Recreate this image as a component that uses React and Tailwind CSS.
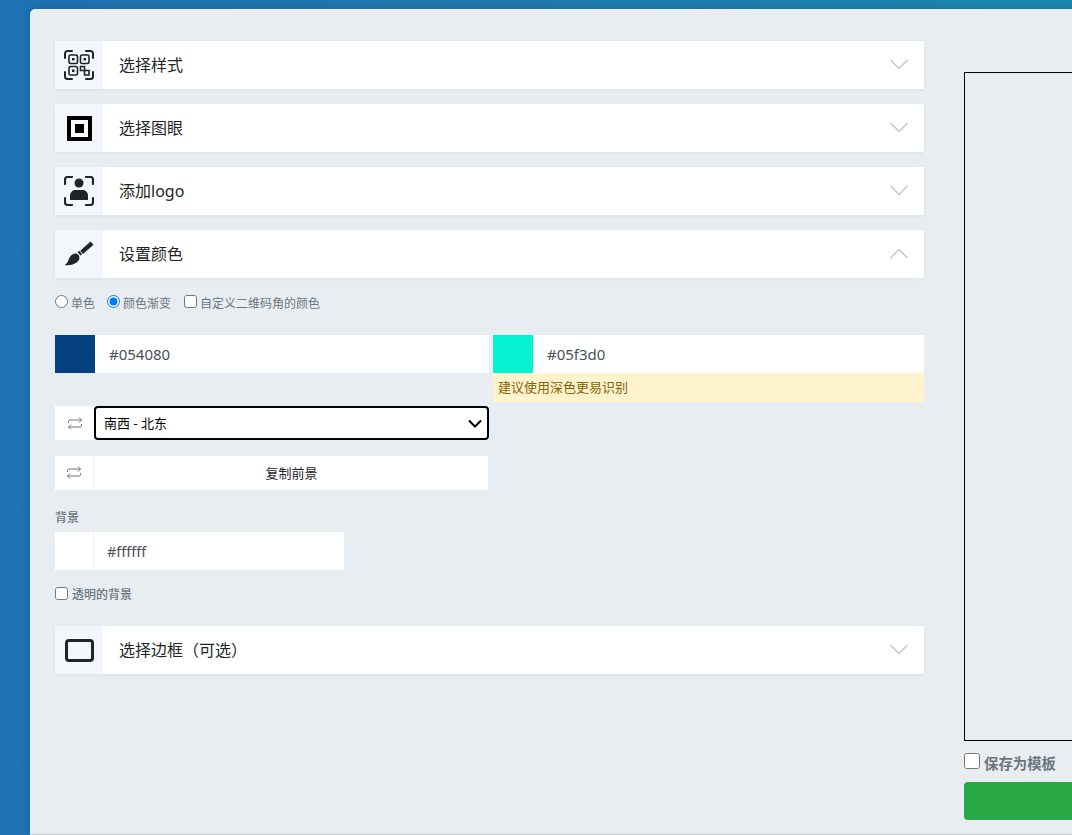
import React from "react";

const cjk = "font-['Noto_Sans','Noto_Sans_CJK_SC',sans-serif]";

function Corners({ width = 2 }) {
  return (
    <path
      d="M1 8V3.500A2.500 2.500 0 0 1 3.500 1H8M22 1h4.500A2.500 2.500 0 0 1 29 3.500V8M29 22v4.500a2.500 2.500 0 0 1-2.500 2.500H22M8 29H3.500A2.500 2.500 0 0 1 1 26.500V22"
      fill="none"
      stroke="#212529"
      strokeWidth={width}
      strokeLinecap="round"
    />
  );
}

function IconQr() {
  return (
    <svg width="30" height="30" viewBox="0 0 30 30">
      <Corners />
      <g fill="none" stroke="#212529" strokeWidth="1.600">
        <rect x="5" y="5" width="8.500" height="8.500" rx="1.500" />
        <rect x="16.500" y="5" width="8.500" height="8.500" rx="1.500" />
        <rect x="5" y="16.500" width="8.500" height="8.500" rx="1.500" />
        <path d="M16.500 16.500h4v4h4.500v4.500h-4.500v-4.500h-4z" />
      </g>
      <g fill="#212529">
        <rect x="8" y="8" width="2.500" height="2.500" />
        <rect x="19.500" y="8" width="2.500" height="2.500" />
        <rect x="8" y="19.500" width="2.500" height="2.500" />
      </g>
    </svg>
  );
}

function IconEye() {
  return (
    <svg width="25" height="25" viewBox="0 0 25 25" className="ml-px mt-px">
      <rect x="0" y="0" width="25" height="25" fill="#000" />
      <rect x="4" y="4" width="17" height="17" fill="#fff" />
      <rect x="8" y="8" width="9" height="9" fill="#000" />
    </svg>
  );
}

function IconPerson() {
  return (
    <svg width="30" height="30" viewBox="0 0 30 30">
      <Corners width={2.200} />
      <circle cx="15" cy="7" r="4.500" fill="#212529" />
      <path d="M6 24v-4.500C6 16.500 8.500 14 11 14h8c2.500 0 5 2.500 5 5.500V24z" fill="#212529" />
    </svg>
  );
}

function IconBrush() {
  return (
    <svg width="30" height="26" viewBox="0 0 30 26">
      <path d="M26.500 .500l3 3.200-10.500 9.300-2.700-3.200z" fill="#212529" />
      <path d="M15.300 9.800l2.800 3.400-1.700 1.400-2.800-3.400z" fill="#212529" />
      <path d="M11.500 12.500c2.500 0 4.200 2.200 3.900 4.800C14.800 22 8 25 .500 24c2-1 3-2.500 4-5 1-3.300 3.500-6.500 7-6.500z" fill="#212529" />
    </svg>
  );
}

function IconFrame() {
  return (
    <svg width="29" height="23" viewBox="0 0 29 23">
      <rect x="1.500" y="1.500" width="26" height="20" rx="2.500" fill="#f3f7fb" stroke="#212529" strokeWidth="3" />
    </svg>
  );
}

function IconSwap() {
  return (
    <svg width="14" height="13" viewBox="0 0 14 13" fill="none" stroke="#5f686f" strokeWidth="0.900">
      <path d="M.500 6V4.500a1.500 1.500 0 0 1 1.500-1.500h11.500M11 .500l2.500 2.500L11 5.500" />
      <path d="M13.500 7v1.500a1.500 1.500 0 0 1-1.500 1.500H.500M3 7.500L.500 10 3 12.500" />
    </svg>
  );
}

function Chevron({ up }) {
  return (
    <svg width="18" height="11" viewBox="0 0 18 11" fill="none" stroke="#bcbfc2" strokeWidth="1.200">
      <path d={up ? "M.500 10L9 1.500 17.500 10" : "M.500 1L9 9.500 17.500 1"} />
    </svg>
  );
}

function AccordionRow({ icon, title, open }) {
  return (
    <div className="flex h-12 items-center bg-white shadow-[0_1px_4px_rgba(0,0,0,0.06)]">
      <div className="flex h-full w-12 items-center justify-center bg-[#f3f7fb]">{icon}</div>
      <div className="flex-1 pl-4 text-base text-[#212529]">{title}</div>
      <div className="flex w-[50px] justify-center pb-[2px]"><Chevron up={open} /></div>
    </div>
  );
}

function ColorInput({ color, value }) {
  return (
    <div className="flex h-[38px] bg-white">
      <div className="w-10" style={{ backgroundColor: color }} />
      <div className="flex flex-1 items-center pl-[14px] text-[15px] text-[#495057]">{value}</div>
    </div>
  );
}

export default function App() {
  return (
    <div className={`h-[835px] w-[1072px] overflow-hidden bg-[linear-gradient(90deg,#1f73b5_0%,#1f7db0_50%,#1a8ab3_100%)] pl-[30px] pt-[9px] ${cjk}`}>
      <div className="flex h-[826px] w-[1100px] rounded-tl-[5px] border-b border-[#c9ced2] bg-[#e8edf1] pl-[25px] pt-8 shadow-[0_0_12px_rgba(0,0,0,0.2)]">
        {/* Left column */}
        <div className="w-[869px] shrink-0">
          <div className="flex flex-col gap-[15px]">
            <AccordionRow icon={<IconQr />} title="选择样式" />
            <AccordionRow icon={<IconEye />} title="选择图眼" />
            <AccordionRow icon={<IconPerson />} title="添加logo" />
            <AccordionRow icon={<IconBrush />} title="设置颜色" open />
          </div>

          {/* Colour options */}
          <div className="mt-4 flex h-[18px] items-center text-xs text-[#6c757d]">
            <label className="flex items-center">
              <input type="radio" name="fill" className="m-0 mb-[3px] h-[13px] w-[13px]" />
              <span className="ml-[3px] mt-px">单色</span>
            </label>
            <label className="ml-[12px] flex items-center">
              <input type="radio" name="fill" defaultChecked className="m-0 mb-[3px] h-[13px] w-[13px]" />
              <span className="ml-[3px] mt-px">颜色渐变</span>
            </label>
            <label className="ml-[13px] flex items-center">
              <input type="checkbox" className="m-0 mb-[3px] h-[13px] w-[13px]" />
              <span className="ml-[3px] mt-px">自定义二维码角的颜色</span>
            </label>
          </div>

          <div className="mt-[23px] grid grid-cols-[434px_431px] gap-x-1">
            <ColorInput color="#054080" value="#054080" />
            <div>
              <ColorInput color="#05f3d0" value="#05f3d0" />
              <div className="flex h-[29px] items-center bg-[#fff3cd] pl-[5px] text-[13px] text-[#856404]">
                建议使用深色更易识别
              </div>
            </div>
          </div>

          <div className="mt-[4px] flex h-[34px] w-[434px] bg-white">
            <div className="flex w-[39px] shrink-0 items-center justify-center"><IconSwap /></div>
            <div className="relative flex-1">
              <select className="h-full w-full appearance-none rounded-[4px] border-2 border-black bg-white pl-2 pt-px text-[13px] text-black outline-none">
                <option>南西 - 北东</option>
              </select>
              <svg width="14" height="9" viewBox="0 0 14 9" fill="none" stroke="#000" strokeWidth="2" className="pointer-events-none absolute right-[7px] top-[13px]">
                <path d="M1 1.500l6 6 6-6" />
              </svg>
            </div>
          </div>

          <div className="mt-4 flex h-[34px] w-[433px] bg-white">
            <div className="flex w-[39px] shrink-0 items-center justify-center border-r border-[#eef0f2] pb-px"><IconSwap /></div>
            <div className="flex flex-1 items-center justify-center pl-px pt-px text-[13px] text-[#212529]">复制前景</div>
          </div>

          <div className="mt-[19px] text-xs leading-[18px] font-medium text-[#6c757d]">背景</div>
          <div className="mt-[5px] flex h-[38px] w-[289px] bg-white">
            <div className="w-[39px] border-r border-[#eef0f2]" />
            <div className="flex flex-1 items-center pl-[13px] pt-px text-[14.500px] text-[#495057]">#ffffff</div>
          </div>

          <label className="mt-4 flex h-[18px] items-center text-xs font-medium text-[#6c757d]">
            <input type="checkbox" className="m-0 mb-[3px] h-[13px] w-[13px]" />
            <span className="ml-[4px]">透明的背景</span>
          </label>

          <div className="mt-[22px]">
            <AccordionRow icon={<IconFrame />} title="选择边框（可选）" />
          </div>
        </div>

        {/* Preview column */}
        <div className="ml-10 flex-1 pt-[31px]">
          <div className="h-[669px] border border-black" />
          <label className="mt-3 flex h-4 items-center text-[14.400px] font-bold text-[#6c757d]">
            <input type="checkbox" className="m-0 h-4 w-4" />
            <span className="ml-1 mt-[6px]">保存为模板</span>
          </label>
          <div className="mt-[13px] h-[38px] rounded-[4px] bg-[#28a745]" />
        </div>
      </div>
    </div>
  );
}
